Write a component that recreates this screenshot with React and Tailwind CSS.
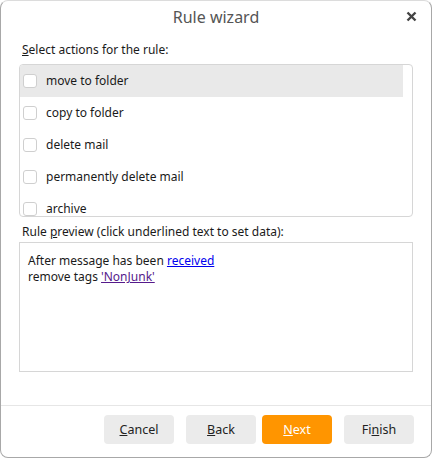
import { useState } from "react";

const actions = [
  "move to folder",
  "copy to folder",
  "delete mail",
  "permanently delete mail",
  "archive",
];

const Btn = ({ children, primary }) => (
  <button
    className={
      "w-[70px] h-[29px] rounded-[4px] text-[12.5px] pt-[2px] " +
      (primary ? "bg-[#ff9500] text-white" : "bg-[#ebebeb] text-[#222]")
    }
  >
    {children}
  </button>
);

const RuleWizard = () => {
  const [checked, setChecked] = useState({});

  return (
    <div
      className="w-[432px] h-[458px] bg-white flex flex-col rounded-lg border border-[#a8a8a8] border-t-[#dcdcdc] overflow-hidden text-[#1a1a1a]"
      style={{ fontFamily: "'Noto Sans', 'Open Sans', sans-serif" }}
    >
      <div className="relative h-[32px] flex items-center justify-center">
        <span className="text-[16px] text-[#555]">Rule wizard</span>
        <button className="absolute right-[14px] top-[10px] leading-none">
          <svg width="11" height="11" viewBox="0 0 11 11">
            <path d="M1.5 1.5 L9.5 9.5 M9.5 1.5 L1.5 9.5" stroke="#444" strokeWidth="2.4" />
          </svg>
        </button>
      </div>

      <div className="px-[18px] flex flex-col">
        <div className="text-[12px] pl-[3px] h-[31px] flex items-center pt-[3px]">
          <span>
            <span className="underline">S</span>elect actions for the rule:
          </span>
        </div>
        <div className="border border-[#d6d6d6] rounded-[4px] h-[153px] overflow-hidden pr-[9px]">
          {actions.map((a, i) => (
            <label
              key={a}
              className={
                "flex items-center h-[32px] gap-[9px] pl-[3px] " +
                (i === 0 ? "bg-[#e9e9e9]" : "")
              }
            >
              <span
                onClick={() => setChecked({ ...checked, [a]: !checked[a] })}
                className="w-[14px] h-[14px] rounded-[3px] border border-[#cfcfcf] bg-white"
              />
              <span className="text-[12px]">{a}</span>
            </label>
          ))}
        </div>

        <div className="text-[12px] pl-[3px] h-[25px] flex items-end pb-[1px]">
          <span>
            Rule <span className="underline">p</span>review (click underlined text to set data):
          </span>
        </div>
        <div className="border border-[#d6d6d6] h-[130px] px-[8px] pt-[10px] text-[12px] leading-[16px]">
          <div>
            After message has been{" "}
            <a className="text-[#0000ee] underline cursor-pointer">received</a>
          </div>
          <div>
            remove tags{" "}
            <a className="text-[#551a8b] underline cursor-pointer">'NonJunk'</a>
          </div>
        </div>
      </div>

      <div className="mt-auto border-t border-[#e6e6e6] h-[52px] flex items-start pt-[9px] pr-[17px] justify-end">
        <Btn>
          <span className="underline">C</span>ancel
        </Btn>
        <div className="w-[12px]" />
        <Btn>
          <span className="underline">B</span>ack
        </Btn>
        <div className="w-[6px]" />
        <Btn primary>
          <span className="underline">N</span>ext
        </Btn>
        <div className="w-[12px]" />
        <Btn>
          Fi<span className="underline">n</span>ish
        </Btn>
      </div>
    </div>
  );
};

export default function App() {
  return <RuleWizard />;
}
